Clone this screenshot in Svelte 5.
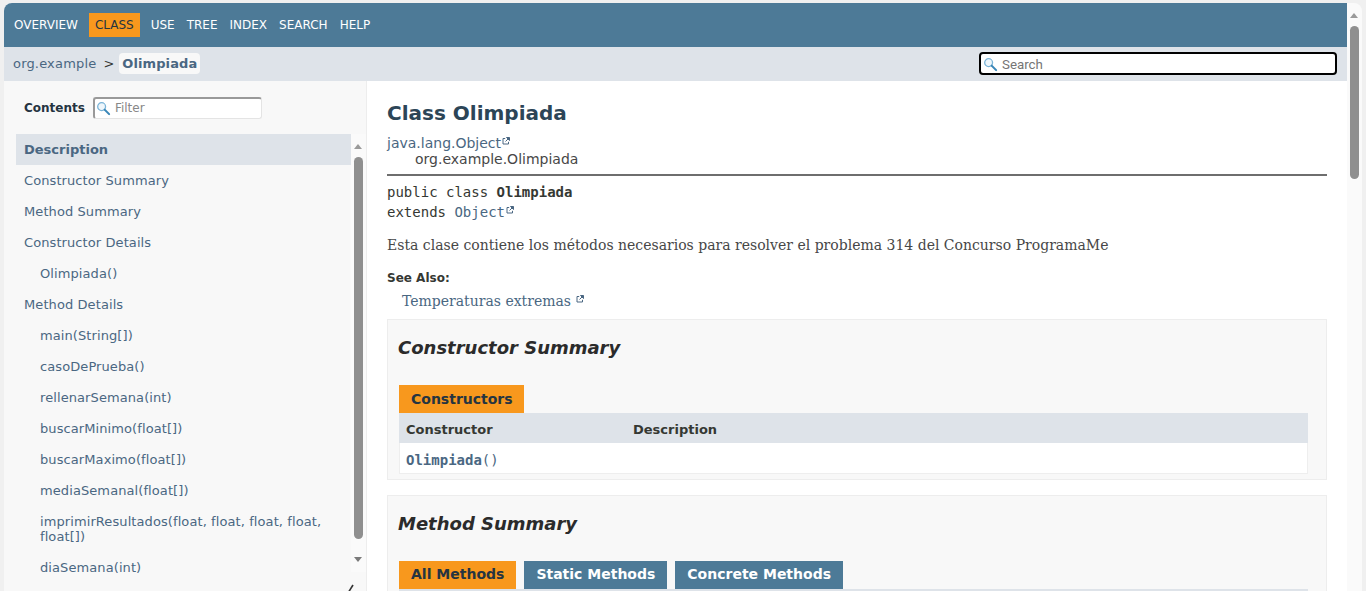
<script lang="ts">
    const topLinks = ["OVERVIEW", "CLASS", "USE", "TREE", "INDEX", "SEARCH", "HELP"];
    const tocLinks = [
        { label: "Description", sub: false, active: true },
        { label: "Constructor Summary", sub: false },
        { label: "Method Summary", sub: false },
        { label: "Constructor Details", sub: false },
        { label: "Olimpiada()", sub: true },
        { label: "Method Details", sub: false },
        { label: "main(String[])", sub: true },
        { label: "casoDePrueba()", sub: true },
        { label: "rellenarSemana(int)", sub: true },
        { label: "buscarMinimo(float[])", sub: true },
        { label: "buscarMaximo(float[])", sub: true },
        { label: "mediaSemanal(float[])", sub: true },
        { label: "imprimirResultados(float, float, float, float, float[])", sub: true },
        { label: "diaSemana(int)", sub: true },
    ];
    const methodTabs = ["All Methods", "Static Methods", "Concrete Methods"];
</script>

{#snippet lens()}
    <svg class="lens" viewBox="0 0 16 16" width="15" height="15" aria-hidden="true">
        <circle cx="6" cy="6" r="4.2" fill="#eef6fb" stroke="#7ab4d8" stroke-width="1.4" />
        <path d="M9.2 9.2 L14 14" stroke="#3a87b8" stroke-width="2.2" stroke-linecap="round" />
    </svg>
{/snippet}

{#snippet external()}
    <svg class="ext" viewBox="0 0 8 8" width="8" height="8" aria-hidden="true">
        <path d="M3.2 1.5 H1 V7 H6.5 V4.8" fill="none" stroke="#4a6782" stroke-width="1" />
        <path d="M4.5 0.5 H7.5 V3.5 Z M6.5 1.5 L3.5 4.5" fill="#4a6782" stroke="#4a6782" stroke-width="1" />
    </svg>
{/snippet}

<div class="window">
    <div class="page">
        <header>
            <nav class="top-nav">
                {#each topLinks as link}
                    <span class="top-link" class:current={link === "CLASS"}>{link}</span>
                {/each}
            </nav>
            <div class="sub-nav">
                <div class="crumbs">
                    <span class="crumb">org.example</span>
                    <span class="sep">&gt;</span>
                    <span class="crumb-current">Olimpiada</span>
                </div>
                <div class="search">
                    {@render lens()}
                    <span>Search</span>
                </div>
            </div>
        </header>

        <div class="main">
            <aside class="sidebar">
                <div class="toc-head">
                    <b>Contents</b>
                    <div class="filter">
                        {@render lens()}
                        <span>Filter</span>
                    </div>
                </div>
                <div class="toc-wrap">
                    <ul class="toc">
                        {#each tocLinks as item}
                            <li class:active={item.active} class:sub={item.sub}>{item.label}</li>
                        {/each}
                    </ul>
                    <div class="mini-scroll">
                        <i class="arrow up small"></i>
                        <div class="thumb"></div>
                        <i class="arrow down small"></i>
                    </div>
                </div>
                <svg class="hide-toc" viewBox="0 0 10 10" width="10" height="10" aria-hidden="true">
                    <path d="M8 1 L3 9" stroke="#333" stroke-width="1.6" fill="none" />
                </svg>
            </aside>

            <main class="content">
                <h1>Class Olimpiada</h1>
                <div class="inherit">
                    <div class="link">java.lang.Object{@render external()}</div>
                    <div class="child">org.example.Olimpiada</div>
                </div>
                <hr />
                <div class="signature">
                    <div>public class <b>Olimpiada</b></div>
                    <div>extends <span class="link">Object{@render external()}</span></div>
                </div>
                <p class="desc">Esta clase contiene los métodos necesarios para resolver el problema 314 del Concurso ProgramaMe</p>
                <div class="see-label">See Also:</div>
                <div class="see-link">Temperaturas extremas {@render external()}</div>

                <section class="summary ctor">
                    <h2>Constructor Summary</h2>
                    <div class="tabs"><span class="tab on">Constructors</span></div>
                    <div class="table">
                        <div class="row head">
                            <span class="col-a">Constructor</span>
                            <span>Description</span>
                        </div>
                        <div class="row body">
                            <code><b>Olimpiada</b>()</code>
                        </div>
                    </div>
                </section>

                <section class="summary methods">
                    <h2>Method Summary</h2>
                    <div class="tabs">
                        {#each methodTabs as tab, i}
                            <span class="tab" class:on={i === 0}>{tab}</span>
                        {/each}
                    </div>
                    <div class="table"><div class="row head"></div></div>
                </section>
            </main>
        </div>
    </div>

    <div class="page-scroll">
        <i class="arrow up"></i>
        <div class="thumb"></div>
    </div>
</div>

<style>
    :global(body) {
        margin: 0;
        overflow: hidden;
        background: #fff;
    }

    .window {
        position: relative;
        display: flex;
        height: 591px;
        overflow: hidden;
        background: #f0f0f0;
        padding: 3px 4px 0 4px;
        box-sizing: border-box;
        font-family: "DejaVu Sans", sans-serif;
        color: #353833;
    }

    .page {
        width: 1343px;
        flex: none;
        display: flex;
        flex-direction: column;
        height: 588px;
        background: #fff;
        border-top-left-radius: 8px;
        overflow: hidden;
    }

    .top-nav {
        height: 44px;
        flex: none;
        background: #4d7a97;
        display: flex;
        align-items: center;
        padding-left: 10px;
        gap: 12px;
        font-size: 12px;
        color: #fff;
    }

    .top-link.current {
        background: #f8981d;
        color: #253441;
        padding: 5px 6px;
        margin: 0 -1px;
    }

    .sub-nav {
        height: 34px;
        flex: none;
        background: #dee3e9;
        display: flex;
        align-items: center;
        justify-content: space-between;
        padding: 0 10px 0 9px;
        font-size: 13px;
    }

    .crumbs {
        display: flex;
        align-items: center;
        margin-top: -1px;
    }

    .crumb {
        color: #4a6782;
        letter-spacing: 0.18px;
    }

    .sep {
        margin: 0 5px 0 7px;
        color: #353833;
    }

    .crumb-current {
        background: #f8f8f8;
        border-radius: 4px;
        padding: 3px;
        font-weight: bold;
        color: #4a6782;
        letter-spacing: 0.1px;
    }

    .search {
        width: 358px;
        height: 23px;
        margin-top: -1px;
        box-sizing: border-box;
        border: 2px solid #000;
        border-radius: 4px;
        background: #fff;
        display: flex;
        align-items: center;
        gap: 4px;
        padding-left: 2px;
        padding-top: 1px;
        font-family: Roboto, sans-serif;
        font-size: 13.33px;
        color: #757575;
    }

    .main {
        flex: 1;
        display: flex;
        min-height: 0;
    }

    .sidebar {
        position: relative;
        width: 363px;
        flex: none;
        box-sizing: border-box;
        background: #f8f8f8;
        border-right: 1px solid #ededed;
    }

    .toc-head {
        height: 53px;
        box-sizing: border-box;
        display: flex;
        align-items: center;
        padding: 0 0 0 20px;
        gap: 8px;
        font-size: 12px;
        color: #253441;
    }

    .filter {
        width: 169px;
        height: 22px;
        box-sizing: border-box;
        border: 1px solid #e4e4e4;
        border-top: 2px solid #999;
        border-left: 2px solid #999;
        border-radius: 3px;
        background: #fff;
        display: flex;
        align-items: center;
        gap: 4px;
        padding-left: 1px;
        font-size: 12px;
        color: #888;
    }

    .toc-wrap {
        position: relative;
        display: flex;
        margin-left: 12px;
    }

    .toc {
        list-style: none;
        margin: 0;
        padding: 0;
        width: 335px;
        font-size: 13px;
        color: #4a6782;
        letter-spacing: 0.09px;
    }

    .toc li {
        padding: 8px;
        line-height: 15px;
    }

    .toc li.sub {
        padding-left: 24px;
        padding-right: 24px;
    }

    .toc li.active {
        background: #dee3e9;
        font-weight: bold;
        letter-spacing: 0;
    }

    .mini-scroll {
        position: relative;
        width: 15px;
        height: 438px;
        background: #fafafa;
    }

    .mini-scroll .thumb {
        position: absolute;
        left: 3px;
        top: 23px;
        width: 9px;
        height: 382px;
        border-radius: 5px;
        background: #8f8f8f;
    }

    .arrow {
        position: absolute;
        width: 0;
        height: 0;
        border-left: 4.5px solid transparent;
        border-right: 4.5px solid transparent;
    }

    .arrow.up {
        border-bottom: 5px solid #9a9a9a;
    }

    .arrow.down {
        border-top: 5px solid #7a7a7a;
    }

    .mini-scroll .arrow.up {
        left: 3px;
        top: 10px;
    }

    .mini-scroll .arrow.down {
        left: 3px;
        top: 423px;
    }

    .hide-toc {
        position: absolute;
        left: 341px;
        bottom: -3px;
    }

    .content {
        flex: 1;
        min-width: 0;
        padding: 0 20px;
        font-size: 14px;
        overflow: hidden;
    }

    h1 {
        margin: 20px 0 10px;
        font-size: 20px;
        line-height: 24px;
        color: #2c4557;
    }

    .inherit {
        font-size: 14px;
        line-height: 16px;
    }

    .link {
        color: #4a6782;
    }

    .ext {
        vertical-align: 3px;
        margin-left: 1px;
    }

    .child {
        padding-left: 28px;
        color: #474747;
    }

    hr {
        margin: 7px 0 6px;
        border: 0;
        border-top: 2px solid #6e6e6e;
    }

    .signature {
        font-family: "DejaVu Sans Mono", monospace;
        font-size: 14px;
        line-height: 20px;
    }

    .desc {
        margin: 13px 0 0;
        font-family: "DejaVu Serif", serif;
        font-size: 14px;
        line-height: 20px;
        color: #474747;
    }

    .see-label {
        margin-top: 15px;
        font-size: 12px;
        font-weight: bold;
        line-height: 16px;
        color: #353833;
    }

    .see-link {
        margin-top: 5px;
        padding-left: 15px;
        font-family: "DejaVu Serif", serif;
        line-height: 20px;
        color: #4a6782;
    }

    .summary {
        border: 1px solid #ededed;
        background: #f8f8f8;
        padding: 0 18px 0 11px;
    }

    .ctor {
        margin-top: 8px;
        height: 161px;
        box-sizing: border-box;
    }

    .ctor .tab {
        padding-right: 11px;
    }

    .methods {
        margin-top: 15px;
    }

    .methods .tab {
        padding-bottom: 2px;
        box-sizing: border-box;
    }

    h2 {
        margin: 17px -1px 0 -1px;
        font-size: 18px;
        font-style: italic;
        line-height: 22px;
        color: #2b2b2b;
    }

    .tabs {
        display: flex;
        gap: 8px;
        margin-top: 26px;
    }

    .tab {
        height: 28px;
        display: flex;
        align-items: center;
        padding: 0 12px;
        font-size: 14px;
        font-weight: bold;
        background: #4d7a97;
        color: #fff;
    }

    .tab.on {
        background: #f8981d;
        color: #253441;
    }

    .table {
        background: #fff;
    }

    .row {
        height: 30px;
        box-sizing: border-box;
        display: flex;
        align-items: center;
    }

    .row.body {
        height: 31px;
        padding: 3px 6px 0;
        border: 1px solid #eee;
        border-top: 0;
    }

    .row.head {
        padding: 2px 7px 0;
        background: #dee3e9;
        font-size: 13px;
        font-weight: bold;
    }

    .col-a {
        width: 227px;
    }

    code {
        font-family: "DejaVu Sans Mono", monospace;
        font-size: 14px;
        color: #4a6782;
    }

    .page-scroll {
        position: relative;
        width: 15px;
        flex: none;
        background: #fafafa;
        border-top-right-radius: 8px;
    }

    .page-scroll .arrow.up {
        left: 3px;
        top: 10px;
    }

    .page-scroll .thumb {
        position: absolute;
        left: 3px;
        top: 23px;
        width: 9px;
        height: 153px;
        border-radius: 5px;
        background: #8f8f8f;
    }
</style>
